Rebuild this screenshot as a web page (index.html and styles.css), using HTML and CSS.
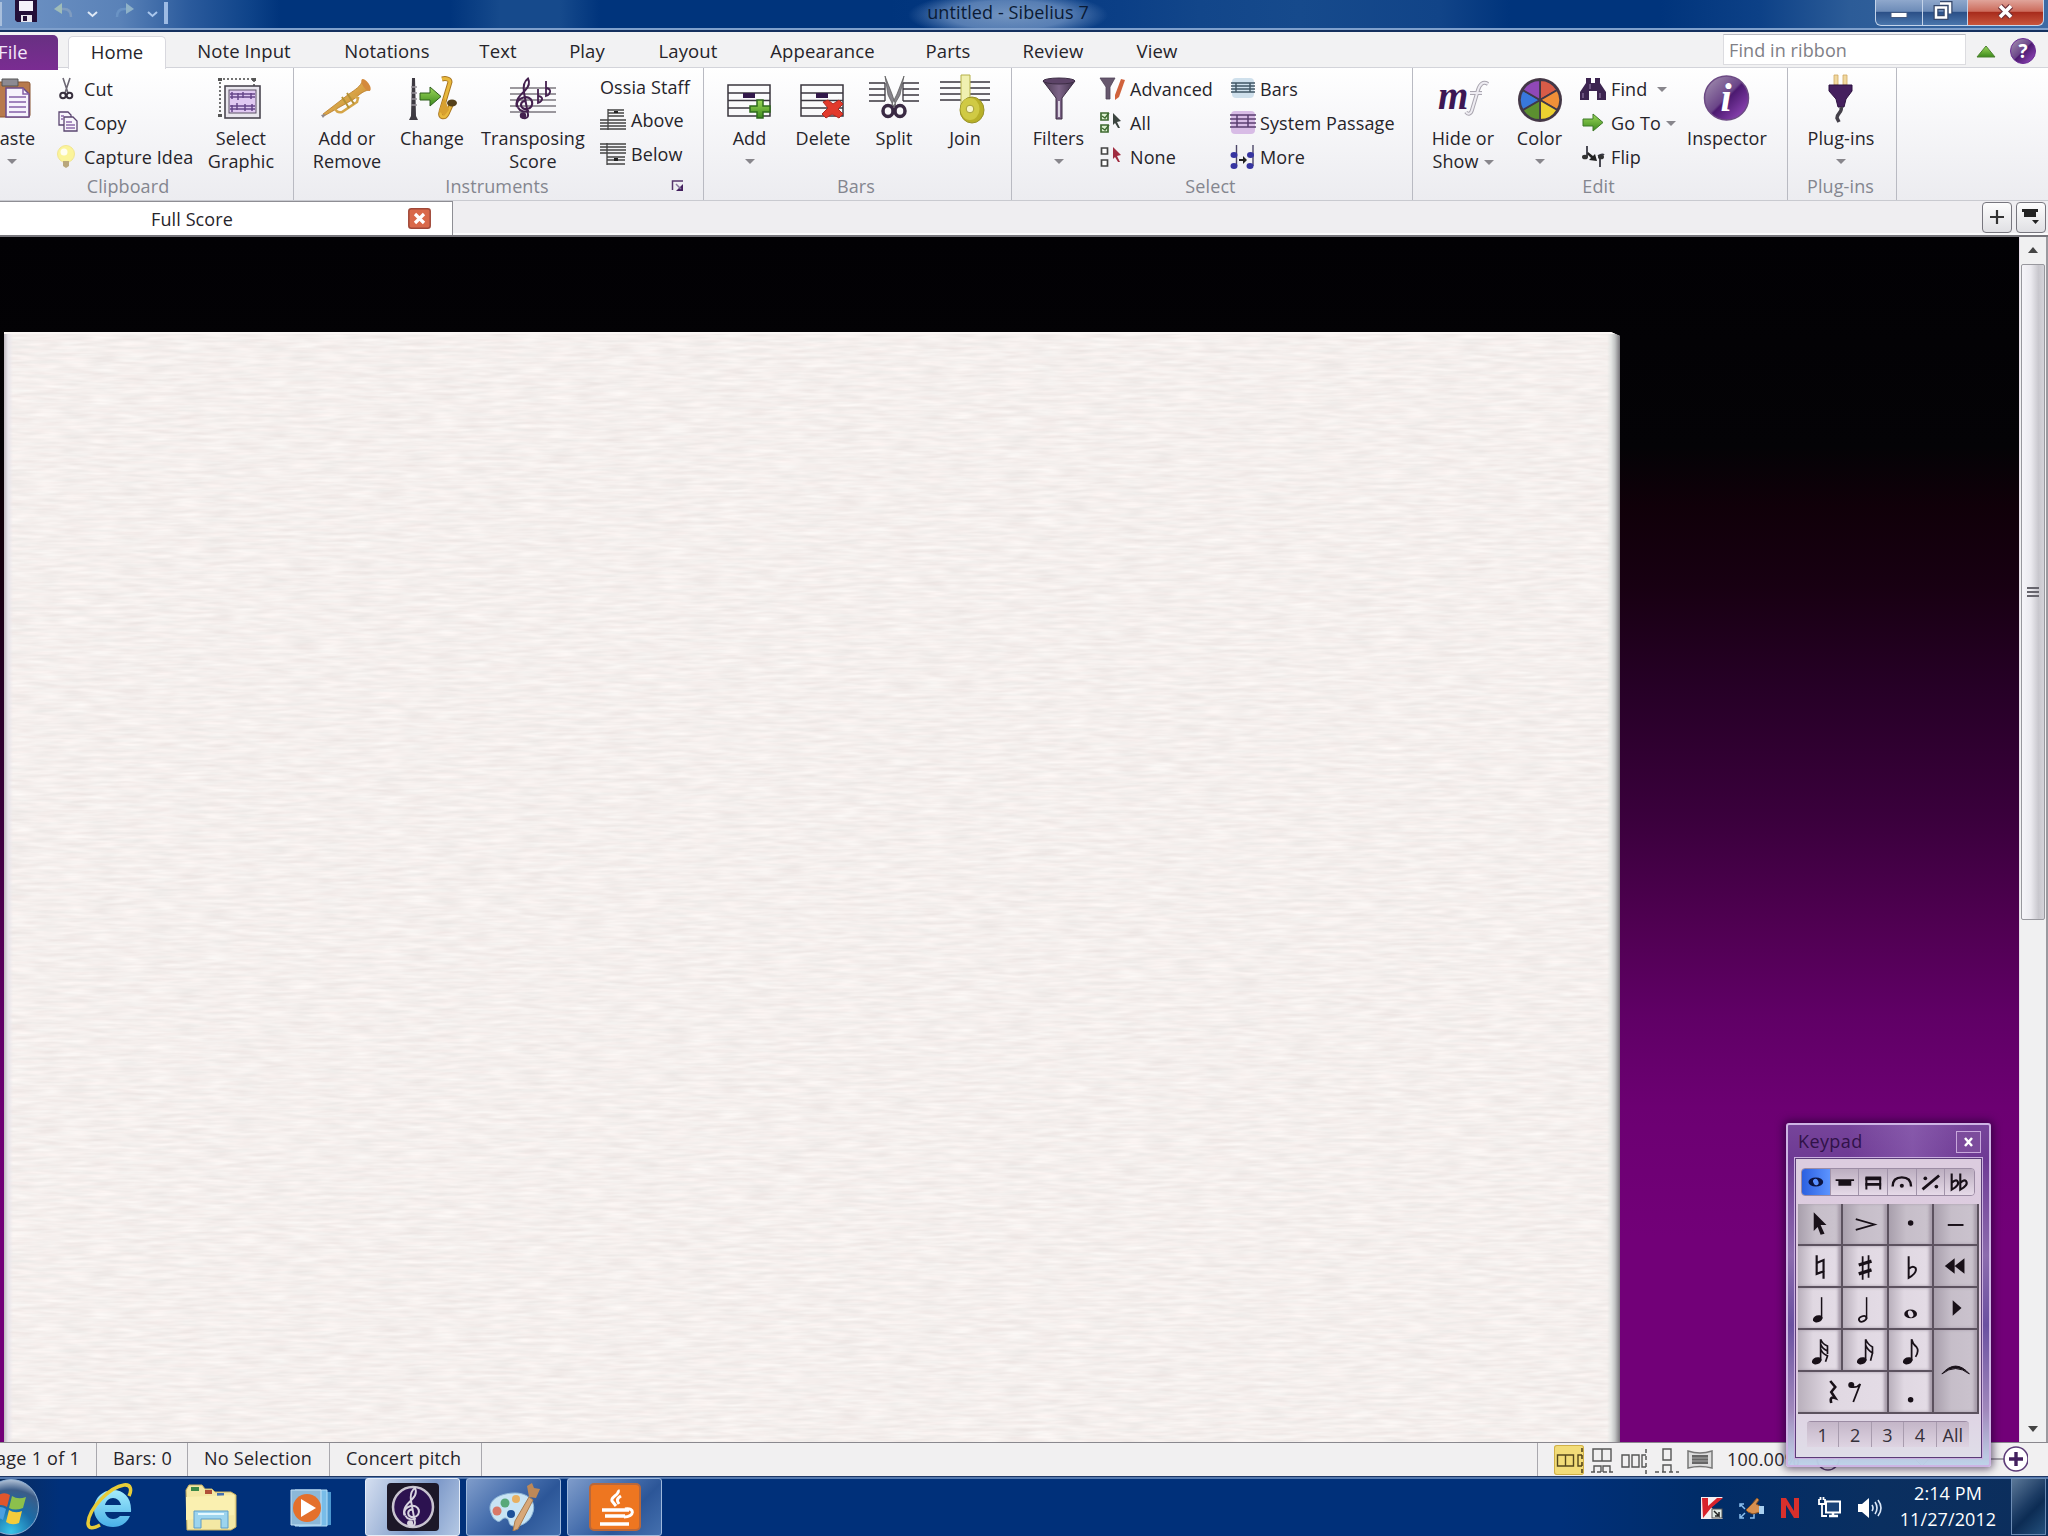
FILE: index.html
```html
<!DOCTYPE html>
<html lang="en">
<head>
    <meta charset="UTF-8">
    <meta name="viewport" content="width=device-width, initial-scale=1.0">
    <title>untitled - Sibelius 7</title>
    <link rel="stylesheet" href="styles.css">
</head>
<body>
    <svg class="defs" width="0" height="0">
        <symbol id="clef" viewBox="0 0 24 44">
            <path d="M13 25c-3-1-5 1-5 3.500c0 3 3 4.500 6 4c4-.6 6-4 5-7.500c-1-3.500-5-5-8.500-4c-5 1.300-8 5-6.500 9.500" fill="none" stroke="currentColor" stroke-width="2.200" transform="translate(-1 0)"/>
            <path d="M4 31c-4-7 2-12 7-17c4-4 5-8 3-12c-4 3-5 8-4 14l4 22c.6 4-5 5-6 2" fill="none" stroke="currentColor" stroke-width="2"/>
            <path d="M4 31c2 4 7 5 11 3" fill="none" stroke="currentColor" stroke-width="2"/>
            <circle cx="9" cy="39" r="3.200" fill="currentColor"/>
        </symbol>
        <linearGradient id="brass" x1="0" y1="0" x2="1" y2="1">
            <stop offset="0" stop-color="#f3d070"/><stop offset="1" stop-color="#c07820"/>
        </linearGradient>
        <linearGradient id="green" x1="0" y1="0" x2="0" y2="1">
            <stop offset="0" stop-color="#9cd85a"/><stop offset="1" stop-color="#3c8a1c"/>
        </linearGradient>
        <linearGradient id="violet" x1="0" y1="0" x2="1" y2="1">
            <stop offset="0" stop-color="#a898b4"/><stop offset=".48" stop-color="#6b4588"/><stop offset=".52" stop-color="#4c1a70"/><stop offset="1" stop-color="#a050c8"/>
        </linearGradient>
        <linearGradient id="metal" x1="0" y1="0" x2="1" y2="0">
            <stop offset="0" stop-color="#4a3a50"/><stop offset=".5" stop-color="#7d6488"/><stop offset="1" stop-color="#40304a"/>
        </linearGradient>
    </svg>

    <header class="titlebar">
        <div class="quick">
            <i class="edge"></i>
            <svg class="q-save" width="24" height="24" viewBox="0 0 24 24"><path d="M1 0h22v22H3l-2-2z" fill="#241038"/><path d="M5 1h14v10H5z" fill="#f4f2fa"/><path d="M7 15h11v7H7z" fill="#e8e6ee"/><path d="M9 16h4v5H9z" fill="#241038"/></svg>
            <svg class="q-undo" width="22" height="16" viewBox="0 0 22 16"><path d="M3 6h8c5 0 7 3 7 8" fill="none" stroke="#7f9cc0" stroke-width="2.500"/><path d="M1 6l8-6v11z" fill="#9fbcb8"/></svg>
            <svg class="q-chev" width="11" height="7" viewBox="0 0 11 7"><path d="M1 1l4.500 4L10 1" fill="none" stroke="#dfe9f6" stroke-width="2"/></svg>
            <svg class="q-redo" width="22" height="16" viewBox="0 0 22 16"><path d="M19 6h-8c-5 0-7 3-7 8" fill="none" stroke="#6a93c4" stroke-width="2.500"/><path d="M21 6l-8-6v11z" fill="#8fb2c8"/></svg>
            <svg class="q-chev" width="11" height="7" viewBox="0 0 11 7"><path d="M1 1l4.500 4L10 1" fill="none" stroke="#a9c6ec" stroke-width="2"/></svg>
            <i class="bar"></i>
        </div>
        <h1>untitled - Sibelius 7</h1>
        <div class="winbtns">
            <span class="min"><svg width="46" height="25" viewBox="0 0 46 25"><path d="M15 12.500h16v5H15z" fill="#fff" stroke="#445a80"/></svg></span>
            <span class="max"><svg width="44" height="25" viewBox="0 0 44 25"><path d="M17 3.500h10v10M13 7.500h10v10H13z" fill="none" stroke="#35476a" stroke-width="5"/><path d="M17 3.500h10v10M13 7.500h10v10H13z" fill="none" stroke="#fff" stroke-width="2.500"/></svg></span>
            <span class="close"><svg width="74" height="25" viewBox="0 0 74 25"><path d="M32 6l11 11M43 6L32 17" stroke="#6c3038" stroke-width="6"/><path d="M32 6l11 11M43 6L32 17" stroke="#fff" stroke-width="3.600"/></svg></span>
        </div>
    </header>

    <nav class="tabs">
        <a class="file">File</a>
        <a class="active">Home</a>
        <a>Note Input</a>
        <a>Notations</a>
        <a>Text</a>
        <a>Play</a>
        <a>Layout</a>
        <a>Appearance</a>
        <a>Parts</a>
        <a>Review</a>
        <a>View</a>
        <div class="search">Find in ribbon</div>
        <svg class="collapse" width="20" height="13" viewBox="0 0 20 13"><path d="M10 1l9 11H1z" fill="url(#green)" stroke="#4c8030"/></svg>
        <svg class="help" width="26" height="26" viewBox="0 0 26 26"><circle cx="13" cy="13" r="12.500" fill="url(#violet)" stroke="#6a2c94"/><text x="13" y="20" text-anchor="middle" font-size="19" font-weight="700" fill="#fff">?</text></svg>
    </nav>

    <section class="ribbon">
        <div class="group clipboard">
            <div class="body">
                <div class="big">
                    <svg width="48" height="48" viewBox="0 0 48 48"><rect x="2" y="7" width="40" height="35" rx="2" fill="#b87a4c" stroke="#8a5530"/><path d="M14 4h16v7H14z" fill="#8c8a92" stroke="#555"/><path d="M18 13h17l6 6v23H18z" fill="#f6f2fc" stroke="#6a4a88" stroke-width="1.500"/><path d="M35 13v6h6M21 22h17M21 27h17M21 32h17M21 37h17" fill="none" stroke="#8560a8" stroke-width="1.500"/></svg>
                    <span>Paste</span><i class="arrow"></i>
                </div>
                <ul>
                    <li><svg width="24" height="24" viewBox="0 0 24 24"><path d="M8 1l5 15M15 1l-5 15" stroke="#6d6874" stroke-width="1.600"/><circle cx="8" cy="18.500" r="2.800" fill="none" stroke="#38303e" stroke-width="2"/><circle cx="14.500" cy="18.500" r="2.800" fill="none" stroke="#38303e" stroke-width="2"/></svg>Cut</li>
                    <li><svg width="24" height="24" viewBox="0 0 24 24"><path d="M4 1h9l3 3v10H4z" fill="#f8f6fc" stroke="#5a4570" stroke-width="1.300"/><path d="M9 6h9l4 4v10H9z" fill="#f8f6fc" stroke="#5a4570" stroke-width="1.300"/><path d="M6 5h3M6 8h2M11 11h6M11 14h9M11 17h9" stroke="#8d6cab" stroke-width="1.500"/></svg>Copy</li>
                    <li><svg width="24" height="24" viewBox="0 0 24 24"><circle cx="11" cy="9" r="8.500" fill="#fbf49a" stroke="#f1e592"/><circle cx="9" cy="7" r="3.500" fill="#fffef0"/><path d="M8 16h6v5l-3 2-3-2z" fill="#b9a77c"/></svg>Capture Idea</li>
                </ul>
                <div class="big">
                    <svg width="48" height="48" viewBox="0 0 48 48"><path d="M3 41V4h34v8" fill="none" stroke="#444" stroke-width="1.500" stroke-dasharray="2 2"/><path d="M1 3h4v3H1zM35 3h4v3h-4zM1 39h4v3H1z" fill="#555"/><rect x="8" y="11" width="35" height="32" fill="#e9e6ee" stroke="#4a4650" stroke-width="1.600"/><rect x="12" y="15" width="27" height="23" fill="#e0c8f2" stroke="#5c5266"/><path d="M13 19h25M13 22h25M13 31h25M13 34h25M15 17v7M21 18v7M26 17v6M34 18v6M15 30v7M20 28v7M28 29v7M35 29v7" stroke="#65468a" stroke-width="1.500"/></svg>
                    <span>Select<br>Graphic</span>
                </div>
            </div>
            <p>Clipboard</p>
        </div>

        <div class="group instruments">
            <div class="body">
                <div class="big">
                    <svg width="54" height="48" viewBox="0 0 54 48"><path d="M3 39l26-20c7-5 11-7 14-14l6 10c-6 1-10 5-15 9L4 41z" fill="url(#brass)" stroke="#b87a28" stroke-width=".8"/><ellipse cx="46" cy="10" rx="3" ry="7" transform="rotate(-35 46 10)" fill="#d48a3c"/><path d="M15 32l16-12 7 3-1 4-15 10c-4 1-7-1-7-5z" fill="none" stroke="#d5a548" stroke-width="2.500"/><path d="M22 22l7 11M27 18l7 11" stroke="#b59135" stroke-width="2"/><path d="M1 40l5-1-3 4z" fill="#8d8890"/></svg>
                    <span>Add or<br>Remove</span>
                </div>
                <div class="big">
                    <svg width="50" height="48" viewBox="0 0 50 48"><path d="M5 3h3l1 38 2 4H2l2-4z" fill="#3e3a42"/><path d="M4 12h6M4 18h6M4 24h6M4 30h6" stroke="#99949c" stroke-width="1.500"/><path d="M35 4c4-1 8 0 8 3l-9 30c-2 6 4 6 6 2l5-11" fill="none" stroke="#a87520" stroke-width="5"/><path d="M35 4c4-1 8 0 8 3l-9 30c-2 6 4 6 6 2l5-11" fill="none" stroke="#e8b83c" stroke-width="3"/><path d="M37 22l-5 14 5 5 5-6z" fill="#d8a030"/><ellipse cx="45" cy="28" rx="5" ry="3.500" fill="#54401a"/><path d="M13 18h10v-6l11 9.500-11 9.500v-6H13z" fill="url(#green)" stroke="#2f5f1c"/></svg>
                    <span>Change</span>
                </div>
                <div class="big">
                    <svg width="48" height="48" viewBox="0 0 48 48"><path d="M1 13h46M1 19h46M1 25h46M1 31h46M1 37h46" stroke="#3c3640" stroke-width="1.200"/><use href="#clef" x="5" y="1" width="24" height="45" color="#44204f"/><path d="M29 14v14c5-2 6-6 0-7M37 6v15c5-2 6-7 0-8" fill="none" stroke="#44204f" stroke-width="1.800"/></svg>
                    <span>Transposing<br>Score</span>
                </div>
                <ul>
                    <li class="nohead">Ossia Staff</li>
                    <li><svg width="26" height="22" viewBox="0 0 26 22"><path d="M8 1h16M8 4h16M8 7h16M0 11h26M0 14h26M0 17h26M0 20h26M8 0v21" stroke="#444" stroke-width="1.300"/><path d="M14 2h4v2h-4z" fill="#222"/></svg>Above</li>
                    <li><svg width="26" height="22" viewBox="0 0 26 22"><path d="M0 1h26M0 4h26M0 7h26M0 10h26M7 14h18M7 17h18M7 21h18M7 0v22" stroke="#444" stroke-width="1.300"/><path d="M14 15h4v3h-4z" fill="#222"/></svg>Below</li>
                </ul>
            </div>
            <p>Instruments</p>
            <svg class="launcher" width="14" height="14" viewBox="0 0 14 14"><path d="M1.500 11V2H12" fill="none" stroke="#55356c" stroke-width="1.500"/><path d="M12 5v7H5z" fill="#43205e"/><path d="M5 5l5 5" stroke="#8a74a0" stroke-width="1.500"/></svg>
        </div>

        <div class="group bars">
            <div class="body">
                <div class="big">
                    <svg width="48" height="48" viewBox="0 0 48 48"><path d="M2 10h42v31H2zM2 18h42M2 25.500h42M2 33h42" fill="none" stroke="#3a363e" stroke-width="1.500"/><path d="M17 18h12v5H17z" fill="#32184a"/><path d="M31 25h6v6h7v6h-7v6h-6v-6h-7v-6h7z" fill="url(#green)" stroke="#2e6a1c" stroke-width="1.500"/></svg>
                    <span>Add</span><i class="arrow"></i>
                </div>
                <div class="big">
                    <svg width="48" height="48" viewBox="0 0 48 48"><path d="M2 10h42v31H2zM2 18h42M2 25.500h42M2 33h42" fill="none" stroke="#3a363e" stroke-width="1.500"/><path d="M17 18h12v5H17z" fill="#32184a"/><path d="M24 27l5-2 5 4 6-4 4 4-5 5 5 5-4 4-7-4-6 4-4-4 6-6z" fill="#e23a2c" stroke="#b02820"/></svg>
                    <span>Delete</span>
                </div>
                <div class="big">
                    <svg width="52" height="48" viewBox="0 0 52 48"><path d="M1 8h16M1 14h16M1 20h16M1 26h16M35 8h16M35 14h16M35 20h16M35 26h16M17 8v18M35 8v18" stroke="#3a363e" stroke-width="1.300"/><path d="M17 1l7 18 4 12-2 1-6-12zM36 1l-7 18-6 12 2 1 7-12z" fill="#86838a" stroke="#555" stroke-width=".7"/><ellipse cx="20" cy="36" rx="5" ry="5.500" fill="none" stroke="#3a2a44" stroke-width="3.500"/><ellipse cx="32" cy="36" rx="5" ry="5.500" fill="none" stroke="#3a2a44" stroke-width="3.500"/></svg>
                    <span>Split</span>
                </div>
                <div class="big">
                    <svg width="52" height="50" viewBox="0 0 52 50"><path d="M1 8h50M1 14h50M1 20h50M1 26h50" stroke="#3a363e" stroke-width="1.300"/><path d="M22 1h9v34h-9z" fill="#f0f0b0" stroke="#b5b048"/><ellipse cx="33" cy="36" rx="12" ry="13" fill="#b8b028" stroke="#98922a"/><ellipse cx="31" cy="35" rx="9.500" ry="11" fill="#d0ca44"/><circle cx="31" cy="35" r="3.800" fill="#f8f6c8" stroke="#a59f38"/></svg>
                    <span>Join</span>
                </div>
            </div>
            <p>Bars</p>
        </div>

        <div class="group select">
            <div class="body">
                <div class="big">
                    <svg width="38" height="48" viewBox="0 0 38 48"><path d="M3 6l13 17v21h6V23L35 6z" fill="url(#metal)" stroke="#3c2c44"/><ellipse cx="19" cy="6" rx="16" ry="3" fill="#5d4468" stroke="#3c2c44"/><path d="M18 26h2v16h-2z" fill="#dcd4e2"/></svg>
                    <span>Filters</span><i class="arrow"></i>
                </div>
                <ul>
                    <li><svg width="26" height="24" viewBox="0 0 26 24"><path d="M1 1h15l-5 9v12H7V10z" fill="#67586e" stroke="#514458" stroke-width=".8"/><path d="M22 2l4 1-6 17-4 3v-5z" fill="#d0623c"/></svg>Advanced</li>
                    <li><svg width="26" height="24" viewBox="0 0 26 24"><path d="M2 2h7v7H2zM2 14h7v7H2z" fill="#dcf0d0" stroke="#3f6a30" stroke-width="1.700"/><path d="M3 5l3 2 4-5M3 17l3 2 4-5" fill="none" stroke="#3f6a30" stroke-width="1.500"/><path d="M14 2l8 8-4 1 3 6-2 0-3-5-2 2z" fill="#3c4540"/></svg>All</li>
                    <li><svg width="26" height="24" viewBox="0 0 26 24"><path d="M2.500 3h6v6h-6zM2.500 15h6v6h-6z" fill="#fff" stroke="#444" stroke-width="1.700"/><path d="M14 2l8 8-4 1 3 6-2 0-3-5-2 2z" fill="#a02c40"/></svg>None</li>
                </ul>
                <ul>
                    <li><svg width="26" height="24" viewBox="0 0 26 24"><rect x="2" y="1" width="22" height="20" rx="4" fill="#cfe0ec"/><path d="M1 6h24M1 9h24M1 12h24M1 15h24M6 6v9M20 6v9" stroke="#405664" stroke-width="1.400"/></svg>Bars</li>
                    <li><svg width="26" height="24" viewBox="0 0 26 24"><rect x="1" y="0" width="24" height="23" rx="4" fill="#d8bce6"/><path d="M0 4h26M0 8h26M0 12h26M0 16h26M7 4v12M18 4v12" stroke="#5a3e70" stroke-width="1.500"/></svg>System Passage</li>
                    <li><svg width="26" height="26" viewBox="0 0 26 26"><path d="M6.500 1v21M23 1v21" stroke="#4c4668" stroke-width="1.400"/><g fill="#3634a0"><ellipse cx="4" cy="11" rx="3.500" ry="3"/><ellipse cx="4" cy="22" rx="3.500" ry="3"/><ellipse cx="20.500" cy="11" rx="3.500" ry="3"/><ellipse cx="20" cy="22" rx="3.500" ry="3"/></g><path d="M9 15h4v-3l4 4-4 4v-3H9z" fill="#222"/></svg>More</li>
                </ul>
            </div>
            <p>Select</p>
        </div>

        <div class="group edit">
            <div class="body">
                <div class="big">
                    <svg width="54" height="48" viewBox="0 0 54 48"><text x="2" y="34" font-family="Liberation Serif, serif" font-size="39" font-weight="700" font-style="italic" fill="#3c1754">m</text><path d="M52 9c-5-3-8 0-10 6l-6 20c-1 4-4 5-6 2M34 18h12" fill="none" stroke="#aaa6b0" stroke-width="4"/><path d="M52 9c-5-3-8 0-10 6l-6 20c-1 4-4 5-6 2M34 18h12" fill="none" stroke="#eeecf2" stroke-width="2"/></svg>
                    <span>Hide or<br>Show<i class="arrow inline"></i></span>
                </div>
                <div class="big">
                    <svg width="48" height="48" viewBox="-24 -25 48 48"><circle r="22" fill="#4a3a48"/><g stroke="#403848" stroke-width="1.800"><path d="M0 0V-20A20 20 0 0 1 17.300-10z" fill="#d85c48"/><path d="M0 0L17.300-10A20 20 0 0 1 17.300 10z" fill="#f09038"/><path d="M0 0L17.300 10A20 20 0 0 1 0 20z" fill="#ecd030"/><path d="M0 0V20A20 20 0 0 1-17.300 10z" fill="#5c9030"/><path d="M0 0L-17.300 10A20 20 0 0 1-17.300-10z" fill="#3878dc"/><path d="M0 0L-17.300-10A20 20 0 0 1 0-20z" fill="#9048b8"/></g></svg>
                    <span>Color</span><i class="arrow"></i>
                </div>
                <ul>
                    <li><svg width="26" height="24" viewBox="0 0 26 24"><path d="M6 1h5v5h4V1h5v5l6 9v8h-9v-9H9v9H0v-8l6-9z" fill="#3c2450"/><path d="M3 16v5M20 16v5M10 7v5" stroke="#7c6490" stroke-width="1.500"/></svg>Find<i class="arrow wide"></i></li>
                    <li><svg width="26" height="24" viewBox="0 0 26 24"><path d="M3 8h10V3l10 8.500L13 20v-5H3z" fill="url(#green)" stroke="#3f7a28"/></svg>Go To<i class="arrow"></i></li>
                    <li><svg width="26" height="24" viewBox="0 0 26 24"><path d="M7 1v11M18 11c3-2 5-2 6-1M20 10v12" fill="none" stroke="#3a3a44" stroke-width="1.800"/><ellipse cx="5" cy="12" rx="3" ry="2.300" fill="#333"/><ellipse cx="21" cy="12" rx="3" ry="2.300" fill="#333"/><path d="M8 7l5 4 2-2 2 7-8-1 2-2-4-4z" fill="#222"/></svg>Flip</li>
                </ul>
                <div class="big">
                    <svg width="48" height="48" viewBox="0 0 48 48"><circle cx="23.500" cy="23" r="22" fill="url(#violet)" stroke="#6c4a84" stroke-width="1.500"/><text x="23" y="36" text-anchor="middle" font-family="Liberation Serif, serif" font-size="40" font-weight="700" font-style="italic" fill="#fff">i</text></svg>
                    <span>Inspector</span>
                </div>
            </div>
            <p>Edit</p>
        </div>

        <div class="group plugins">
            <div class="body">
                <div class="big">
                    <svg width="30" height="50" viewBox="0 0 30 50"><path d="M8 1h4v10H8zM17 1h4v10h-4z" fill="#f0d8a0" stroke="#d0a860" stroke-width=".8"/><path d="M3 11h23v6l-6 8-2 8h-6l-2-8-7-8z" fill="#45205e" stroke="#2c1040"/><path d="M15 33c2 5-4 6-4 11l2 4" fill="none" stroke="#44404a" stroke-width="3.500"/></svg>
                    <span>Plug-ins</span><i class="arrow"></i>
                </div>
            </div>
            <p>Plug-ins</p>
        </div>
    </section>

    <div class="doctabs">
        <div class="doctab">
            <span>Full Score</span>
            <svg width="23" height="21" viewBox="0 0 23 21"><rect x=".8" y=".8" width="21.400" height="19.400" rx="2.500" fill="#d9694a" stroke="#a04838" stroke-width="1.500"/><path d="M7 6l9 9M16 6l-9 9" stroke="#fff" stroke-width="3.200"/></svg>
        </div>
        <div class="docbtns">
            <span><svg width="28" height="28" viewBox="0 0 28 28"><path d="M14 7v14M7 14h14" stroke="#333" stroke-width="2.200"/></svg></span>
            <span><svg width="28" height="28" viewBox="0 0 28 28"><path d="M5 6h16v3H5zM7 9h12v5H7z" fill="#222"/><path d="M15 17h7l-3.500 4z" fill="#222"/></svg></span>
        </div>
    </div>

    <main class="workspace">
        <div class="canvas">
            <div class="paper">
                <svg width="1616" height="1110">
                    <filter id="grain" x="0" y="0" width="100%" height="100%" color-interpolation-filters="sRGB">
                        <feTurbulence type="fractalNoise" baseFrequency="0.035 0.28" numOctaves="2" seed="4"/>
                        <feColorMatrix values="0.09 0 0 0 0.914  0.09 0.03 0 0 0.878  0.09 0.03 0 0 0.870  0 0 0 0 1"/>
                    </filter>
                    <rect width="1616" height="1110" filter="url(#grain)"/>
                </svg>
            </div>
        </div>
        <div class="scroll">
            <i class="up"></i>
            <div class="thumb"><i></i><i></i><i></i></div>
            <i class="down"></i>
        </div>
    </main>

    <footer class="status">
        <span class="page">Page 1 of 1</span>
        <span class="nbars">Bars: 0</span>
        <span class="sel">No Selection</span>
        <span class="pitch">Concert pitch</span>
        <div class="views">
            <svg class="on" width="30" height="30" viewBox="0 0 30 30"><path d="M3.500 10h8v11h-8zM11.500 10h8v11h-8zM28 10h-4v11h4" fill="none" stroke="#55471c" stroke-width="1.400"/><path d="M28 3v25" stroke="#55471c" stroke-width="1.600" stroke-dasharray="4 3"/></svg>
            <svg width="24" height="28" viewBox="0 0 24 28"><path d="M3 3h9v12H3zM12 3h9v12h-9zM4 26v-6h7v6M13 26v-6h7v6" fill="none" stroke="#555" stroke-width="1.400"/><path d="M1 26h22" stroke="#555" stroke-width="1.500" stroke-dasharray="4 2"/></svg>
            <svg width="28" height="28" viewBox="0 0 28 28"><path d="M2 9h7v12H2zM12 9h7v12h-7zM26 9h-4v12h4" fill="none" stroke="#555" stroke-width="1.400"/><path d="M26 3v25" stroke="#555" stroke-width="1.500" stroke-dasharray="4 3"/></svg>
            <svg width="26" height="28" viewBox="0 0 26 28"><path d="M9 3h8v11H9zM9 26v-7h8v7" fill="none" stroke="#555" stroke-width="1.400"/><path d="M1 26h24" stroke="#555" stroke-width="1.500" stroke-dasharray="4 3"/></svg>
            <svg width="28" height="28" viewBox="0 0 28 28"><path d="M2 5q12 4 24 0v17q-12-3-24 0z" fill="#ddd" stroke="#777" stroke-width="1.500"/><path d="M6 9h16v9H6z" fill="#666"/><path d="M6 12h16M6 15h16" stroke="#aaa"/></svg>
            <b>100.00%</b>
        </div>
        <div class="zoom">
            <svg width="214" height="34" viewBox="0 0 214 34"><path d="M20 16h170" stroke="#8b8890" stroke-width="1.500"/><circle cx="14" cy="16" r="11" fill="#f2eff6" stroke="#554068" stroke-width="1.500"/><path d="M8 16h12" stroke="#43205e" stroke-width="3"/><path d="M102 9h12v8l-6 6-6-6z" fill="#ddd" stroke="#777"/><circle cx="202" cy="16" r="12" fill="#fff" stroke="#5d3c78" stroke-width="1.600"/><path d="M202 9v14M195 16h14" stroke="#43205e" stroke-width="3.400"/></svg>
        </div>
    </footer>

    <div class="taskbar">
        <svg class="orb" width="60" height="58" viewBox="0 0 60 58">
            <defs><radialGradient id="orb" cx=".5" cy=".95" r=".95"><stop offset="0" stop-color="#38c4e8"/><stop offset=".45" stop-color="#1a6ca8"/><stop offset=".8" stop-color="#3b5c88"/><stop offset="1" stop-color="#b4c4d8"/></radialGradient></defs>
            <circle cx="31" cy="29" r="27.500" fill="url(#orb)" stroke="#8fb0d4"/>
            <path d="M17 18q7-5 13-1l-3 12q-6-4-13 0z" fill="#e0562c"/><path d="M32 18q6 4 14 1l-3 11q-8 3-14 0z" fill="#8cc04c"/><path d="M13 31q7-4 13 0l-3 11q-6-4-13 0z" fill="#4aa0e0"/><path d="M29 32q6 4 13 1l-3 12q-7 3-13-1z" fill="#f4cc3c"/>
        </svg>
        <svg class="ie" width="56" height="54" viewBox="0 0 56 54">
            <defs><linearGradient id="ie" x1="0" y1="0" x2="0" y2="1"><stop offset="0" stop-color="#a4ecfc"/><stop offset="1" stop-color="#48b0e8"/></linearGradient></defs>
            <path d="M49 36c-3 7-9 11-17 11c-11 0-19-8-19-18S21 10 32 10s19 8 18 22H24c1 4 4 7 8 7c3 0 5-1 7-3zM24 25h16c-1-4-4-7-8-7c-4 0-7 3-8 7z" fill="url(#ie)"/>
            <path d="M48 16c3-6 2-12-5-11C29 7 8 28 7 43c0 6 5 6 12 2" fill="none" stroke="#e8cc38" stroke-width="3.500"/>
        </svg>
        <svg class="folder" width="56" height="50" viewBox="0 0 56 50">
            <path d="M3 8l3-5h13l3 4h7l3 3h16l5 3v32l-5 3H4z" fill="#f4e8a4" stroke="#c8b060"/><path d="M8 5h8v4H8z" fill="#3c8a48"/><path d="M22 8h7v4h-7z" fill="#b05038"/><path d="M34 11h7v3h-7z" fill="#4470b0"/><path d="M3 15l48-2v20l-48 5z" fill="#faf0b0"/><path d="M11 46V29h34v17h-7V37H18v9z" fill="#9cd4ee" stroke="#5c9cc8"/><path d="M15 32h26" stroke="#e4f8ff" stroke-width="2"/>
        </svg>
        <svg class="wmp" width="46" height="42" viewBox="0 0 46 42">
            <path d="M9 2l32 2v33l-32 2z" fill="#4c98d0"/><path d="M5 2l32 0v36l-32 0z" fill="#78bce8" stroke="#b8e0f8"/><path d="M1 2h30v35H1z" fill="#8cb8d8" stroke="#c4e2f6"/><circle cx="17" cy="20" r="14" fill="#e4702c"/><path d="M11 11l15 9-15 9z" fill="#fff"/>
        </svg>
        <a class="task front">
            <svg width="52" height="48" viewBox="0 0 52 48"><rect width="52" height="48" rx="4" fill="#1c1828"/><circle cx="26" cy="24" r="20" fill="#2c1250" stroke="#c8c4d0" stroke-width="2.500"/><use href="#clef" x="14" y="3" width="24" height="42" color="#d8d4e0"/></svg>
        </a>
        <a class="task">
            <svg width="54" height="48" viewBox="0 0 54 48"><path d="M4 30c-5-12 8-20 24-20c14 0 21 9 18 19c-3 11-13 15-20 14c-6-1-2-6-7-8c-4-1-5 5-9 3q-5-3-6-8z" fill="#c8e4f4" stroke="#90b8d8"/><circle cx="10" cy="28" r="4.500" fill="#d87868"/><circle cx="18" cy="20" r="4.500" fill="#58a878"/><circle cx="29" cy="16" r="4" fill="#e8b060"/><circle cx="24" cy="31" r="4" fill="#1c5098"/><path d="M42 14l4 3-15 29-5 2 2-10z" fill="#d8a878" stroke="#a87c50"/><path d="M40 3l5-3 2 5 6 1-4 9-7-1z" fill="#bc8858"/></svg>
        </a>
        <a class="task">
            <svg width="52" height="48" viewBox="0 0 52 48"><rect x="1" y="1" width="50" height="46" rx="4" fill="#ee7620" stroke="#b8683c" stroke-width="2"/><path d="M29 7c3 4-8 7-6 11l4 5M32 13c-5 3-4 5-2 8" fill="none" stroke="#fff" stroke-width="3"/><path d="M13 27h27M16 33h20M11 41h29" stroke="#fff" stroke-width="3.600"/><path d="M36 26c10-2 10 8-1 8" fill="none" stroke="#fff" stroke-width="3"/></svg>
        </a>
        <div class="tray">
            <svg width="24" height="24" viewBox="0 0 24 24"><path d="M1 1h22L11 11l12 12H1z" fill="#f4f0f2"/><path d="M2 2h6v8l9-8h6L11 12 3 22z" fill="#d8222c"/><rect x="12" y="13" width="10" height="9" fill="#dfe8e4" stroke="#555"/><path d="M14 15l5 5v-4M19 20h-4" fill="none" stroke="#222" stroke-width="1.500"/></svg>
            <svg width="28" height="24" viewBox="0 0 28 24"><path d="M2 11V8h4M2 18v4h4M12 22h4v-4M3 9l4 4M3 21l4-4" fill="none" stroke="#8cc0f0" stroke-width="1.500"/><path d="M8 14l6-6 5-6 2 2-3 4 4 2v6l-7 2-5-2z" fill="#d89050" stroke="#885428"/><path d="M21 10h5v8h-5z" fill="#a8d0f0"/></svg>
            <svg width="20" height="22" viewBox="0 0 20 22"><path d="M1 21V1h5l8 13V1h5v20h-5L6 8v13z" fill="#d8302c"/></svg>
            <svg width="26" height="24" viewBox="0 0 26 24"><path d="M9 5.500h14v11H9z" fill="#1c4478" stroke="#fff" stroke-width="2"/><path d="M12 20h9M16 17v3" stroke="#fff" stroke-width="2.500"/><path d="M2 3v5h6V3M3.500 1v3M6.500 1v3M5 8v12h5" fill="none" stroke="#fff" stroke-width="1.800"/></svg>
            <svg width="26" height="24" viewBox="0 0 26 24"><path d="M1 8h4l7-6v20l-7-6H1z" fill="#fff"/><path d="M15 9q2 3 0 6M18 6q4 6 0 12M21 4q6 8 0 16" fill="none" stroke="#dce8f8" stroke-width="1.600"/></svg>
        </div>
        <div class="clock">2:14 PM<br>11/27/2012</div>
        <div class="desktop"></div>
    </div>

    <aside class="keypad">
        <div class="head"><span>Keypad</span><i><svg width="23" height="20" viewBox="0 0 23 20"><path d="M8 6l7 8M15 6l-7 8" stroke="#fff" stroke-width="2.500"/></svg></i></div>
        <div class="inner">
            <div class="modes">
                <span class="on"><svg viewBox="0 0 30 26"><ellipse cx="15" cy="13" rx="8" ry="5" fill="#0c1440"/><ellipse cx="15" cy="13" rx="2.800" ry="3.600" transform="rotate(-25 15 13)" fill="#5a90ff"/></svg></span>
                <span><svg viewBox="0 0 30 26"><path d="M5 10h20v2h-3v5H8v-5H5z"/></svg></span>
                <span><svg viewBox="0 0 30 26"><path d="M7 7h17v4H7zM7 14h17v3H7z"/><path d="M8 8v13M23 8v13" stroke="#181018" stroke-width="2.200"/></svg></span>
                <span><svg viewBox="0 0 30 26"><path d="M5 18q0-10 10-10t10 10" fill="none" stroke="#181018" stroke-width="2.600"/><circle cx="15" cy="17" r="2.200"/></svg></span>
                <span><svg viewBox="0 0 30 26"><path d="M6 21L24 6" stroke="#181018" stroke-width="3"/><circle cx="9" cy="9" r="2"/><circle cx="21" cy="18" r="2"/></svg></span>
                <span><svg viewBox="0 0 30 26"><path d="M7 4v17q9-5 6-9-2-2-6 2M16 4v17q9-5 6-9-2-2-6 2" fill="none" stroke="#181018" stroke-width="2.200"/></svg></span>
            </div>
            <div class="keys">
                <span class="dk"><svg viewBox="0 0 44 40"><path d="M16 8l13 13-6 0 4 9-4 1-3-8-4 4z"/></svg></span>
                <span class="dk"><svg viewBox="0 0 44 40"><path d="M13 15l19 5.500L13 26" fill="none" stroke="#181018" stroke-width="1.800"/></svg></span>
                <span class="dk"><svg viewBox="0 0 44 40"><circle cx="22" cy="19" r="2.800"/></svg></span>
                <span class="dk"><svg viewBox="0 0 44 40"><path d="M14 21h16" stroke="#181018" stroke-width="2"/></svg></span>
                <span><svg viewBox="0 0 44 40"><path d="M19 9v19l8-3M26 33V14l-7 3" fill="none" stroke="#181018" stroke-width="2.200"/></svg></span>
                <span><svg viewBox="0 0 44 40"><path d="M20 10v24M26 9v23" stroke="#181018" stroke-width="1.800"/><path d="M16 19l13-4M16 28l13-4" stroke="#181018" stroke-width="3.400"/></svg></span>
                <span><svg viewBox="0 0 44 40"><path d="M20 10v22q9-5 7-10-3-3-7 1" fill="none" stroke="#181018" stroke-width="2"/></svg></span>
                <span class="dk"><svg viewBox="0 0 44 40"><path d="M21 12v16l-10-8zM31 12v16l-10-8z"/></svg></span>
                <span><svg viewBox="0 0 44 40"><path d="M24 9v22" stroke="#181018" stroke-width="1.500"/><ellipse cx="20" cy="31" rx="5" ry="3.500" transform="rotate(-20 20 31)"/></svg></span>
                <span><svg viewBox="0 0 44 40"><path d="M24 9v22" stroke="#181018" stroke-width="1.500"/><ellipse cx="20" cy="31" rx="4" ry="2.600" transform="rotate(-25 20 31)" fill="none" stroke="#181018" stroke-width="1.800"/></svg></span>
                <span><svg viewBox="0 0 44 40"><ellipse cx="22" cy="26" rx="6.500" ry="4.500"/><ellipse cx="22" cy="26" rx="2.600" ry="3.600" transform="rotate(-20 22 26)" fill="#e2dae4"/></svg></span>
                <span class="dk"><svg viewBox="0 0 44 40"><path d="M19 12l9 8-9 8z"/></svg></span>
                <span><svg viewBox="0 0 44 40"><path d="M23 9v22M23 9q2 5 7 7v8M23 14q2 5 7 7M23 19q2 5 7 7l-2 6" fill="none" stroke="#181018" stroke-width="1.700"/><ellipse cx="19" cy="31" rx="5" ry="3.500" transform="rotate(-20 19 31)"/></svg></span>
                <span><svg viewBox="0 0 44 40"><path d="M23 9v22M23 9q2 5 7 8v7M23 15q2 5 7 8l-2 8" fill="none" stroke="#181018" stroke-width="1.700"/><ellipse cx="19" cy="31" rx="5" ry="3.500" transform="rotate(-20 19 31)"/></svg></span>
                <span><svg viewBox="0 0 44 40"><path d="M23 9v22M23 9q1 5 5 8 3 4-1 10" fill="none" stroke="#181018" stroke-width="1.800"/><ellipse cx="19" cy="31" rx="5" ry="3.500" transform="rotate(-20 19 31)"/></svg></span>
                <span class="dk tall"><svg viewBox="0 0 44 82"><path d="M8 44q14-16 28 0q-14-11-28 0z" stroke="#181018"/></svg></span>
                <span class="wide"><svg viewBox="0 0 88 40"><path d="M32 9l5 6-4 5 4 6q-6-2-4 5" fill="none" stroke="#181018" stroke-width="2.600"/><circle cx="53" cy="13" r="3"/><path d="M53 15q6 1 9-3l-7 18" fill="none" stroke="#181018" stroke-width="1.800"/></svg></span>
                <span><svg viewBox="0 0 44 40"><circle cx="22" cy="28" r="2.800"/></svg></span>
            </div>
            <div class="voices"><span>1</span><span>2</span><span>3</span><span>4</span><span>All</span></div>
        </div>
    </aside>
</body>
</html>
```
FILE: styles.css
```css
*{
    padding: 0;
    margin: 0;
    box-sizing: border-box;
}
body{
    width: 2048px;
    height: 1536px;
    overflow: hidden;
    position: relative;
    font-family: "Open Sans", "Noto Sans", sans-serif;
    font-size: 18px;
    letter-spacing: 0.1px;
    color: #26242a;
    background-color: #efeef1;
}
ul{
    list-style: none;
}
svg{
    display: block;
    flex: none;
}
.defs{
    position: absolute;
}

/* title bar */
.titlebar{
    height: 32px;
    display: flex;
    justify-content: space-between;
    background: linear-gradient(90deg, #6f93c4 0, #5a82b8 120px, #2a5a9c 190px, #0e4389 250px, #00347c 280px, #00347c 450px, #164a8c 500px, #164a8c 560px, #00347c 600px, #00347c 890px, #0b3f86 1120px, #12468a 1200px, #164a8c 1300px, #114488 1440px, #00347c 1510px, #00347c 1660px, #0d4187 1760px, #2c5c98 1850px, #3c6aa4 2048px);
    border-bottom: 2px solid #14305e;
    box-shadow: inset 0 -2px 0 #7fa0cc;
}
.quick{
    width: 640px;
    display: flex;
    align-items: flex-start;
}
.quick .edge{
    width: 2px;
    height: 24px;
    margin-top: 2px;
    background-color: #a9bfdc;
}
.q-save{
    margin-left: 12px;
}
.q-undo{
    margin: 3px 0 0 15px;
}
.q-chev{
    margin: 11px 0 0 12px;
}
.q-redo{
    margin: 3px 0 0 15px;
}
.quick .bar{
    width: 4px;
    height: 22px;
    margin: 2px 0 0 6px;
    background-color: #9dbbe4;
}
.titlebar h1{
    width: 260px;
    font-size: 18px;
    font-weight: 400;
    line-height: 25px;
    text-align: center;
    color: #0a1a34;
    background: radial-gradient(ellipse 100px 24px at center, rgba(150,178,214,.75) 0, rgba(130,162,206,.65) 60%, rgba(120,150,200,0) 100%);
}
.winbtns{
    width: 672px;
    display: flex;
    justify-content: flex-end;
    padding-right: 4px;
}
.winbtns span{
    height: 26px;
    border: 1px solid #c4d4ea;
    border-top: 0;
    border-left: 0;
    overflow: hidden;
    background: linear-gradient(#8fa8cc 0, #6d8cb8 45%, #2b5088 50%, #4a76ac 100%);
}
.winbtns .min{
    width: 48px;
    border-left: 1px solid #c4d4ea;
    border-radius: 0 0 0 6px;
}
.winbtns .max{
    width: 45px;
}
.winbtns .close{
    width: 76px;
    border-radius: 0 0 6px 0;
    background: linear-gradient(#e0a49a 0, #cc6c5c 45%, #a82c1c 50%, #c8553c 100%);
}

/* ribbon tabs */
.tabs{
    height: 36px;
    display: grid;
    grid-template-columns: 58px 10px 98px 156px 130px 92px 86px 116px 153px 98px 112px 96px 518px 243px 1fr 52px;
    background-color: #f2f2f3;
    border-bottom: 1px solid #d3d4da;
    text-align: center;
    line-height: 38px;
    font-size: 18.5px;
}
.tabs .file{
    margin-top: 3px;
    line-height: 33px;
    text-align: left;
    text-indent: -2px;
    color: #f3e6fa;
    border-radius: 0 5px 0 0;
    background: linear-gradient(#683082, #7a2c92);
}
.tabs .active{
    grid-column: 3;
    height: 33px;
    margin-top: 4px;
    line-height: 29px;
    background-color: #fff;
    border: 1px solid #d8d8de;
    border-bottom: 0;
    border-radius: 5px 5px 0 0;
}
.tabs .search{
    grid-column: 14;
    height: 31px;
    margin-top: 2px;
    padding-left: 5px;
    line-height: 30px;
    font-size: 18px;
    text-align: left;
    color: #808086;
    background-color: #fff;
    border: 1px solid #dcdce0;
    border-top-color: #b8b8be;
}
.collapse{
    margin: 13px 0 0 10px;
}
.help{
    margin: 6px 0 0 14px;
}

/* ribbon */
.ribbon{
    height: 133px;
    display: flex;
    background: linear-gradient(#fff 0, #f8f8fa 35%, #ececf0 100%);
    border-bottom: 1px solid #c9cad0;
}
.group{
    flex: none;
    position: relative;
    border-right: 1px solid #b9bac2;
}
.group .body{
    height: 107px;
    display: grid;
    padding-top: 4px;
}
.group p{
    padding-right: 3px;
    text-align: center;
    line-height: 23px;
    color: #84868f;
}
.clipboard{
    width: 331px;
    margin-left: -37px;
}
.clipboard .body{
    padding-left: 6px;
    grid-template-columns: 86px 149px 74px;
}
.clipboard p{
    padding-right: 0;
}
.instruments{
    width: 410px;
}
.instruments .body{
    padding-left: 10px;
    grid-template-columns: 86px 84px 118px 100px;
}
.instruments ul{
    padding-left: 8px;
    margin-top: -2px;
}
.bars{
    width: 308px;
}
.bars .body{
    padding-left: 9px;
    grid-template-columns: 73px 74px 68px 74px;
}
.select{
    width: 401px;
}
.select .body{
    padding-left: 6px;
    grid-template-columns: 81px 131px 170px;
}
.edit{
    width: 375px;
}
.edit .body{
    padding-left: 10px;
    grid-template-columns: 80px 73px 108px 86px;
}
.edit ul{
    padding-left: 4px;
}
.plugins{
    width: 109px;
}
.plugins .body{
    padding-left: 7px;
    grid-template-columns: 92px;
}
.big{
    display: flex;
    flex-direction: column;
    align-items: center;
    text-align: center;
    line-height: 22.5px;
    padding-top: 2px;
}
.big > svg{
    height: 50px;
    margin-bottom: 3px;
}
.big span{
    white-space: nowrap;
}
.arrow{
    width: 0;
    height: 0;
    border: 5px solid transparent;
    border-top-color: #88868c;
    border-bottom: 0;
}
.big > .arrow{
    margin-top: 9px;
}
.arrow.inline{
    display: inline-block;
    margin: 0 0 3px 5px;
}
.group li{
    height: 34.2px;
    display: flex;
    align-items: center;
    white-space: nowrap;
    gap: 5px;
}
.select ul + ul li{
    gap: 4px;
}
.group li.nohead{
    height: 33px;
}
.group li .arrow.wide{
    margin-left: 5px;
}
.launcher{
    position: absolute;
    right: 18px;
    bottom: 7px;
}

/* document tabs */
.doctabs{
    height: 36px;
    display: flex;
    justify-content: space-between;
    border-bottom: 2px solid #77767c;
    box-shadow: inset 0 -2px 0 #fbfbfc;
}
.doctab{
    width: 453px;
    display: flex;
    justify-content: flex-end;
    align-items: center;
    padding-right: 21px;
    background-color: #fff;
    border: 1px solid #8e8e94;
    border-left: 0;
    border-bottom: 0;
}
.doctab span{
    width: 300px;
    margin-right: 66px;
    text-align: center;
    line-height: 32px;
}
.doctabs .docbtns{
    display: flex;
    gap: 4px;
    padding: 1px 2px 0 0;
}
.docbtns span{
    width: 30px;
    height: 31px;
    border: 1px solid #77767e;
    border-radius: 4px;
    background: linear-gradient(#fdfdfd, #e0e0e4);
}

/* score area */
.workspace{
    height: 1205px;
    display: flex;
}
.canvas{
    flex: 1;
    padding: 95px 0 0 4px;
    overflow: hidden;
    background: linear-gradient(#020104 0, #040306 210px, #100009 270px, #180012 350px, #260026 450px, #3a003c 580px, #500052 690px, #600066 780px, #6c0072 870px, #720078 1000px);
}
.paper{
    width: 1616px;
    height: 1110px;
    position: relative;
    clip-path: polygon(0 0, 1607px 0, 100% 4px, 100% 100%, 0 100%);
}
.paper::after{
    content: "";
    position: absolute;
    inset: 0;
    border-top: 2px solid #faf6f4;
    background: linear-gradient(90deg, #bfb9c0 0, #e9e6ec 4px, rgba(240,238,242,0) 9px, rgba(240,238,242,0) 1603px, #e4e6e4 1607px, #c2c4c4 1611px, #77757a 1616px);
}
.scroll{
    width: 29px;
    display: flex;
    flex-direction: column;
    align-items: center;
    background-color: #f0f0f1;
    border-left: 1px solid #e6dde8;
    border-right: 2px solid #9a999f;
}
.scroll .up, .scroll .down{
    border: 5px solid transparent;
}
.scroll .up{
    border-top: 0;
    border-bottom: 6px solid #444;
    margin: 10px 0 11px;
}
.scroll .down{
    border-bottom: 0;
    border-top: 6px solid #444;
    margin: auto 0 10px;
}
.thumb{
    width: 24px;
    height: 656px;
    display: flex;
    flex-direction: column;
    align-items: center;
    justify-content: center;
    gap: 2px;
    border: 1px solid #98989e;
    border-radius: 2px;
    background: linear-gradient(90deg, #f6f5f9 0, #ebeaef 40%, #c8c7cd 75%, #d4d3d9 100%);
}
.thumb i{
    width: 12px;
    height: 2px;
    background-color: #67656d;
}

/* status bar */
.status{
    height: 34px;
    display: flex;
    line-height: 31px;
    white-space: nowrap;
    letter-spacing: 0.25px;
    background-color: #f1f0f1;
    border-top: 1px solid #8a888e;
}
.status span{
    padding-left: 16px;
    border-right: 1px solid #a9a8ae;
}
.status .page{
    width: 115px;
    margin-left: -18px;
    padding-left: 3px;
}
.status .nbars{
    width: 91px;
}
.status .sel{
    width: 142px;
}
.status .pitch{
    width: 152px;
}
.views{
    height: 33px;
    margin-left: 1055px;
    padding-left: 16px;
    display: flex;
    align-items: center;
    gap: 6px;
    border-left: 1px solid #a9a8ae;
}
.views .on{
    background-color: #f2dc78;
    border-radius: 3px;
    box-shadow: inset 0 0 0 1px #d0b048;
}
.views b{
    width: 72px;
    margin-left: 7px;
    font-weight: 400;
}
.zoom{
    margin-left: auto;
    margin-right: 20px;
}

/* taskbar */
.taskbar{
    height: 60px;
    display: flex;
    align-items: center;
    background: linear-gradient(90deg, #0a2c5e 0, #00307a 60px, #00307a 1560px, #002c68 1700px, #0a2f60 1880px, #0c2e5c 2048px);
    border-top: 1px solid #1f3764;
    box-shadow: inset 0 2px 0 #5579ae;
}
.orb{
    margin-left: -20px;
}
.ie{
    margin-left: 41px;
}
.folder{
    margin-left: 46px;
}
.wmp{
    margin: 4px 0 0 51px;
}
.task{
    width: 95px;
    height: 58px;
    margin-left: 6px;
    display: flex;
    align-items: center;
    justify-content: center;
    border: 1px solid #9db8dc;
    border-radius: 3px;
    background: linear-gradient(135deg, #7f9cca 0, #4870ae 40%, #2c5698 65%, #4470ae 100%);
}
.wmp + .task{
    margin-left: 29px;
}
.task.front{
    border-color: #e4ecf8;
    background: linear-gradient(115deg, #d4def0 0, #a8bcdc 30%, #7c98c8 60%, #b4c8e4 100%);
}
.tray{
    margin-left: auto;
    display: flex;
    align-items: center;
    gap: 14px;
    padding-top: 3px;
}
.tray svg:nth-child(4){
    margin-left: 3px;
}
.clock{
    width: 130px;
    text-align: center;
    line-height: 25.5px;
    color: #fff;
}
.desktop{
    width: 35px;
    height: 57px;
    margin: 0 2px 0 -2px;
    border: 1px solid #6c8cb4;
    background: linear-gradient(135deg, #5c7898 0, #1c3c64 45%, #0c2c54 60%, #24507c 100%);
}

/* floating keypad */
.keypad{
    position: absolute;
    left: 1786px;
    top: 1123px;
    width: 205px;
    height: 344px;
    padding: 0 8px;
    border: 2px solid #cdb4e4;
    border-radius: 3px;
    background: linear-gradient(90deg, rgba(160,110,190,0) 30%, rgba(160,120,196,.4) 62%, rgba(160,110,190,0) 90%) 0 0 / 100% 34px no-repeat, linear-gradient(#76449a 0, #6e3a94 34px, #8c6cae 130px, #6a50a0 200px, #a088bc 285px, #b8c0dc 325px, rgba(190,214,236,.95) 344px);
    box-shadow: 0 0 8px 2px rgba(20,0,40,.6);
}
.keypad .head{
    height: 33px;
    display: flex;
    justify-content: space-between;
    padding: 5px 0 0 2px;
    line-height: 22px;
    letter-spacing: 0.4px;
    color: #301248;
}
.keypad .head i{
    width: 25px;
    height: 22px;
    margin-top: 1px;
    border: 1px solid #c8a8dc;
    background-color: #7c4c9c;
}
.keypad .inner{
    width: 187px;
    height: 300px;
    margin-left: -1px;
    padding: 9px 2px 0 2px;
    border: 1px solid #5a3c78;
    outline: 1px solid #cbb0e0;
    background: linear-gradient(#dcccdf 0, #dfcbe0 70%, #dfdde8 100%);
}
.modes{
    height: 28px;
    margin: 0 4px 8px 3px;
    display: grid;
    grid-template-columns: repeat(6, 1fr);
    border: 1px solid #9c8ca4;
    border-radius: 4px;
    overflow: hidden;
}
.modes span{
    border-right: 1px solid #a294aa;
    background: linear-gradient(#bcaec0, #e6dae8);
}
.modes span:last-child{
    border-right: 0;
}
.modes .on{
    background: linear-gradient(90deg, #2c60e0, #5c94ff);
}
.modes svg, .keys svg{
    width: 100%;
    height: 100%;
    fill: #181018;
}
.keys{
    height: 210px;
    display: grid;
    grid-template-columns: repeat(4, 1fr);
    grid-template-rows: repeat(5, 1fr);
}
.keys span{
    min-height: 0;
    border-right: 2px solid #5c525f;
    border-bottom: 2px solid #5c525f;
    box-shadow: inset -3px 0 3px #a79dab;
    background: linear-gradient(90deg, #b9b0bc 0, #e0d8e2 35%, #e4dce6 100%);
}
.keys .dk{
    background: linear-gradient(90deg, #a89fac 0, #c6bec9 40%, #cbc3ce 100%);
}
.keys .tall{
    grid-column: 4;
    grid-row: 4 / 6;
}
.keys .wide{
    grid-column: 1 / 3;
}
.voices{
    height: 26px;
    margin: 7px 10px 0 9px;
    display: grid;
    grid-template-columns: repeat(5, 1fr);
    line-height: 27px;
    text-align: center;
    border-top: 1px solid #9c8ca4;
    border-radius: 4px 4px 0 0;
    overflow: hidden;
    color: #35303a;
}
.voices span{
    border-right: 1px solid #a89cae;
    background: linear-gradient(#c4b6c8, #e0d6e4);
}
.voices span:last-child{
    border-right: 0;
}
```
